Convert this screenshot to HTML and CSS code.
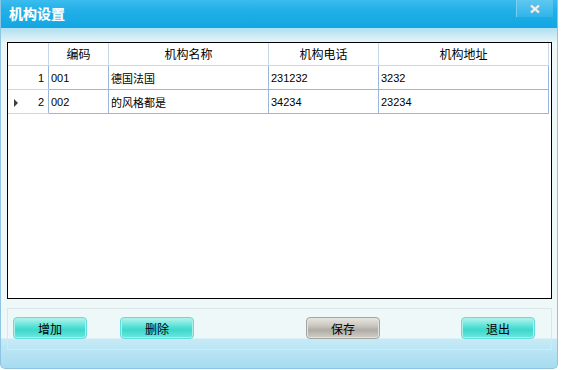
FILE: index.html
```html
<!DOCTYPE html>
<html lang="zh-CN">
<head>
    <meta charset="UTF-8">
    <title>机构设置</title>
    <link rel="stylesheet" href="styles.css">
</head>
<body>
    <div class="window">
        <div class="titlebar">
            <span class="title">机构设置</span>
            <div class="close-btn">
                <svg width="12" height="10" viewBox="0 0 12 10">
                    <path d="M2 1.5 L10 8.5 M10 1.5 L2 8.5" stroke="#9fb4c0" stroke-width="3.2"/>
                    <path d="M2 1.5 L10 8.5 M10 1.5 L2 8.5" stroke="#eef2f4" stroke-width="2"/>
                </svg>
            </div>
        </div>
        <div class="body">
            <div class="grid">
                <table>
                    <thead>
                        <tr>
                            <th class="rowhead"></th>
                            <th class="c-code">编码</th>
                            <th class="c-name">机构名称</th>
                            <th class="c-tel">机构电话</th>
                            <th class="c-addr">机构地址</th>
                        </tr>
                    </thead>
                    <tbody>
                        <tr>
                            <td class="rowhead"><span class="num">1</span></td>
                            <td>001</td>
                            <td>德国法国</td>
                            <td>231232</td>
                            <td>3232</td>
                        </tr>
                        <tr>
                            <td class="rowhead"><span class="arrow"></span><span class="num">2</span></td>
                            <td>002</td>
                            <td>的风格都是</td>
                            <td>34234</td>
                            <td>23234</td>
                        </tr>
                    </tbody>
                </table>
            </div>
            <div class="toolbar">
                <button class="btn btn-add">增加</button>
                <button class="btn btn-del">删除</button>
                <button class="btn btn-save">保存</button>
                <button class="btn btn-exit">退出</button>
            </div>
        </div>
    </div>
</body>
</html>
```

FILE: styles.css
```css
body {
    margin: 0;
    padding: 0;
    background: #ffffff;
    font-family: "Liberation Sans", "Noto Sans CJK SC", sans-serif;
    font-size: 12px;
    color: #000;
}

.window {
    width: 556px;
    height: 368px;
    border: 1px solid #90c4e4;
    border-top: none;
    border-radius: 0 0 5px 5px;
    overflow: hidden;
    background: linear-gradient(to bottom, #eef8f8 0, #eef8f8 338px, #c6eaf6 339px, #a6dcf0 368px);
}

.titlebar {
    height: 28px;
    background: linear-gradient(to bottom, #3cbcee 0, #22b0e8 10px, #12a6e2 28px);
    display: flex;
    align-items: flex-start;
    justify-content: space-between;
}

.title {
    color: #ffffff;
    font-family: "Noto Sans CJK SC", sans-serif;
    font-weight: bold;
    font-size: 14px;
    line-height: 16px;
    padding: 5px 0 0 8px;
    text-shadow: 0 0 1px #6ac6ec;
}

.close-btn {
    width: 36px;
    height: 17px;
    margin-right: 4px;
    background: linear-gradient(to bottom, #5ec8f0, #30b4ea);
    border-left: 1px solid #7ad0f2;
    display: flex;
    align-items: center;
    justify-content: center;
}

.body {
    padding: 14px 5px 0 6px;
    background: linear-gradient(to bottom, #aedff2 0, #e6f5f8 14px, transparent 15px);
}

.grid {
    height: 255px;
    border: 1px solid #000;
    background: #ffffff;
}

table {
    border-collapse: collapse;
    table-layout: fixed;
    width: 541px;
}

th {
    height: 22px;
    font-family: "Noto Sans CJK SC", sans-serif;
    font-weight: normal;
    font-size: 12px;
    text-align: center;
    border-right: 1px solid #c8d8ec;
    border-bottom: 1px solid #c8d8ec;
    padding: 0;
    line-height: 22px;
}

.rowhead {
    width: 40px;
}

.c-code { width: 59px; }
.c-name { width: 159px; }
.c-tel { width: 109px; }

td {
    height: 22px;
    border: 1px solid #9cb6d8;
    padding: 1px 0 0 2px;
    white-space: nowrap;
    overflow: hidden;
    font-size: 11px;
}

td.rowhead {
    border-left: none;
    border-color: #c8d8ec;
    border-right-color: #9cb6d8;
    padding: 1px 4px 0 6px;
}

.rowhead .num {
    float: right;
}

.arrow {
    display: inline-block;
    width: 0;
    height: 0;
    border-top: 4px solid transparent;
    border-bottom: 4px solid transparent;
    border-left: 4px solid #404040;
    vertical-align: middle;
}

.toolbar {
    margin-top: 9px;
    height: 42px;
    border: 1px solid #dce6e8;
    display: flex;
    align-items: flex-start;
    padding: 8px 0 0 5px;
    box-sizing: border-box;
}

.btn {
    width: 74px;
    height: 22px;
    border: 1px solid #64dcdc;
    border-radius: 4px;
    background: linear-gradient(to bottom, #b4f4ec 0, #5ee2d6 40%, #3cd8cc 60%, #70e6dc 100%);
    font-family: "Noto Sans CJK SC", sans-serif;
    font-size: 12px;
    color: #000;
    padding: 0;
    box-shadow: inset 0 0 0 1px #aaf0ea;
}

.btn-del {
    margin-left: 33px;
}

.btn-save {
    margin-left: 112px;
    border-color: #a4a4a0;
    background: linear-gradient(to bottom, #e8e6e0 0, #c8c6be 40%, #aeaca4 60%, #d0cec8 100%);
    box-shadow: inset 0 0 0 1px #e4e2dc;
}

.btn-exit {
    margin-left: 81px;
}
```
